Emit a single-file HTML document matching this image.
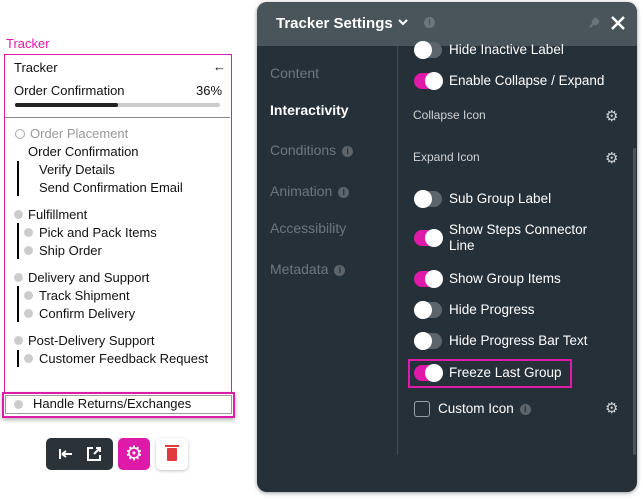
<html><head><style>
body{margin:0;width:643px;height:499px;background:#fff;font-family:"Liberation Sans",sans-serif;position:relative;overflow:hidden}
.a{position:absolute;white-space:nowrap}
.t{font-size:13px;color:#111}
.d{width:9px;height:9px;border-radius:50%;background:#ccc;position:absolute}
.vl{position:absolute;width:2px;background:#000}
.tg{position:absolute;width:28px;height:16px;border-radius:8px;background:#5d656b}
.tg::after{content:"";position:absolute;left:0;top:-1px;width:18px;height:18px;border-radius:50%;background:#fff}
.tg.on{background:#e01aa8}
.tg.on::after{left:11px}
.nav{position:absolute;left:13px;color:#6f777c;font-size:14px;white-space:nowrap}
.i{display:inline-block;width:11px;height:11px;border-radius:50%;background:#5d656b;color:#263038;font-size:9px;text-align:center;line-height:11px;font-weight:bold;vertical-align:1px;margin-left:6px}
.l{position:absolute;left:192px;color:#fff;font-size:13.5px;white-space:nowrap}
.s{position:absolute;left:156px;color:#cfd3d6;font-size:12px;white-space:nowrap}
.g{position:absolute;left:348px;color:#cfd3d6;font-size:15px;line-height:15px}
</style></head><body>
<div class="a" style="left:6px;top:36px;color:#e01aa8;font-size:13px">Tracker</div>
<div class="a" style="left:4px;top:54px;width:226px;height:338px;border:1px solid #e01aa8"></div>
<div class="a t" style="left:14px;top:60px">Tracker</div>
<div class="a t" style="left:213px;top:59px">←</div>
<div class="a t" style="left:14px;top:83px">Order Confirmation</div>
<div class="a t" style="left:196px;top:83px">36%</div>
<div class="a" style="left:15px;top:103px;width:205px;height:4px;background:#ccc;border-radius:2px"></div>
<div class="a" style="left:15px;top:103px;width:103px;height:4px;background:#222;border-radius:2px"></div>
<div class="a" style="left:5px;top:117px;width:225px;height:1px;background:#888"></div>
<div class="a" style="left:15px;top:129px;width:8px;height:8px;border:1px solid #aaa;border-radius:50%"></div>
<div class="a t" style="left:30px;top:126px;color:#999">Order Placement</div>
<div class="a t" style="left:28px;top:144px">Order Confirmation</div>
<div class="vl" style="left:17px;top:161px;height:35px"></div>
<div class="a t" style="left:39px;top:162px">Verify Details</div>
<div class="a t" style="left:39px;top:180px">Send Confirmation Email</div>
<div class="d" style="left:14px;top:210px"></div><div class="a t" style="left:28px;top:207px">Fulfillment</div>
<div class="vl" style="left:17px;top:223px;height:36px"></div>
<div class="d" style="left:24px;top:228px"></div><div class="a t" style="left:39px;top:225px">Pick and Pack Items</div>
<div class="d" style="left:24px;top:246px"></div><div class="a t" style="left:39px;top:243px">Ship Order</div>
<div class="d" style="left:14px;top:273px"></div><div class="a t" style="left:28px;top:270px">Delivery and Support</div>
<div class="vl" style="left:17px;top:286px;height:36px"></div>
<div class="d" style="left:24px;top:291px"></div><div class="a t" style="left:39px;top:288px">Track Shipment</div>
<div class="d" style="left:24px;top:309px"></div><div class="a t" style="left:39px;top:306px">Confirm Delivery</div>
<div class="d" style="left:14px;top:336px"></div><div class="a t" style="left:28px;top:333px">Post-Delivery Support</div>
<div class="vl" style="left:17px;top:350px;height:17px"></div>
<div class="d" style="left:24px;top:354px"></div><div class="a t" style="left:39px;top:351px">Customer Feedback Request</div>
<div class="a" style="left:2px;top:392px;width:229px;height:22px;border:2px solid #e01aa8;box-shadow:0 2px 4px rgba(0,0,0,.3)"></div>
<div class="a" style="left:5px;top:395px;width:225px;height:17px;border:1px solid #999"></div>
<div class="d" style="left:14px;top:400px"></div><div class="a t" style="left:33px;top:396px">Handle Returns/Exchanges</div>
<div class="a" style="left:46px;top:438px;width:67px;height:32px;background:#2b3339;border-radius:5px;color:#fff;font-size:14px">
<svg class="a" style="left:12px;top:9px" width="16" height="14"><path d="M2 2v10M4 7h10M4 7l4-3M4 7l4 3" stroke="#fff" stroke-width="2" fill="none"/></svg>
<svg class="a" style="left:40px;top:8px" width="16" height="16"><path d="M7 2H2v12h12V9" stroke="#fff" stroke-width="2" fill="none"/><path d="M8 8l6-6M10 2h4v4" stroke="#fff" stroke-width="2" fill="none"/></svg></div>
<div class="a" style="left:118px;top:438px;width:32px;height:32px;background:#e01aa8;border-radius:5px;color:#fff;font-size:20px;text-align:center;line-height:32px">⚙</div>
<div class="a" style="left:156px;top:438px;width:32px;height:32px;background:#fff;border-radius:5px;box-shadow:0 1px 3px rgba(0,0,0,.25)"><div class="a" style="left:11px;top:10px;width:10px;height:13px;background:#e0393e;border-radius:1px"></div><div class="a" style="left:9px;top:7px;width:14px;height:2px;background:#e0393e"></div></div>

<div class="a" style="left:257px;top:2px;width:380px;height:490px;background:#263038;border-radius:10px;box-shadow:0 1px 4px rgba(0,0,0,.4);overflow:hidden">
<div class="a" style="left:0;top:0;width:380px;height:44px;background:#4a555b"></div>
<div class="a" style="left:19px;top:13px;color:#fff;font-size:15px;font-weight:bold">Tracker Settings</div>
<svg class="a" style="left:141px;top:16px" width="10" height="8"><path d="M1 2l4 4 4-4" stroke="#fff" stroke-width="2" fill="none"/></svg>
<div class="a" style="left:167px;top:15px;width:11px;height:11px;border-radius:50%;background:#6c777c;color:#4a555b;font-size:9px;text-align:center;line-height:11px;font-weight:bold">i</div>
<svg class="a" style="left:330px;top:14px" width="14" height="14"><path d="M3 11l4-4M6 3l5 5M8 2l4 4M5 5l4 4" stroke="#6c777c" stroke-width="2" fill="none"/></svg>
<svg class="a" style="left:353px;top:13px" width="16" height="16"><path d="M2 2l12 12M14 2L2 14" stroke="#fff" stroke-width="2.5"/></svg>
<div class="a" style="left:140px;top:44px;width:1px;height:409px;background:#414b52"></div>
<div class="a" style="left:376px;top:146px;width:3px;height:307px;background:#4a555b;border-radius:2px"></div>

<div class="nav" style="top:63px">Content</div>
<div class="nav" style="top:100px;color:#fff;font-weight:bold">Interactivity</div>
<div class="nav" style="top:140px">Conditions<span class="i">i</span></div>
<div class="nav" style="top:181px">Animation<span class="i">i</span></div>
<div class="nav" style="top:218px">Accessibility</div>
<div class="nav" style="top:259px">Metadata<span class="i">i</span></div>

<div class="tg" style="left:157px;top:40px"></div><div class="l" style="top:40px">Hide Inactive Label</div>
<div class="tg on" style="left:157px;top:71px"></div><div class="l" style="top:71px">Enable Collapse / Expand</div>
<div class="s" style="top:106px">Collapse Icon</div><div class="g" style="top:107px">⚙</div>
<div class="s" style="top:148px">Expand Icon</div><div class="g" style="top:149px">⚙</div>
<div class="tg" style="left:157px;top:189px"></div><div class="l" style="top:189px">Sub Group Label</div>
<div class="tg on" style="left:157px;top:228px"></div><div class="l" style="top:220px;line-height:16px">Show Steps Connector<br>Line</div>
<div class="tg on" style="left:157px;top:269px"></div><div class="l" style="top:269px">Show Group Items</div>
<div class="tg" style="left:157px;top:300px"></div><div class="l" style="top:300px">Hide Progress</div>
<div class="tg" style="left:157px;top:331px"></div><div class="l" style="top:331px">Hide Progress Bar Text</div>
<div class="a" style="left:151px;top:357px;width:160px;height:25px;border:2px solid #e01aa8"></div>
<div class="tg on" style="left:157px;top:363px"></div><div class="l" style="top:363px">Freeze Last Group</div>
<div class="a" style="left:157px;top:399px;width:14px;height:14px;border:1.5px solid #9aa1a5;border-radius:3px"></div>
<div class="l" style="left:181px;top:399px">Custom Icon<span class="i">i</span></div>
<div class="g" style="top:399px">⚙</div>
</div>
</body></html>
